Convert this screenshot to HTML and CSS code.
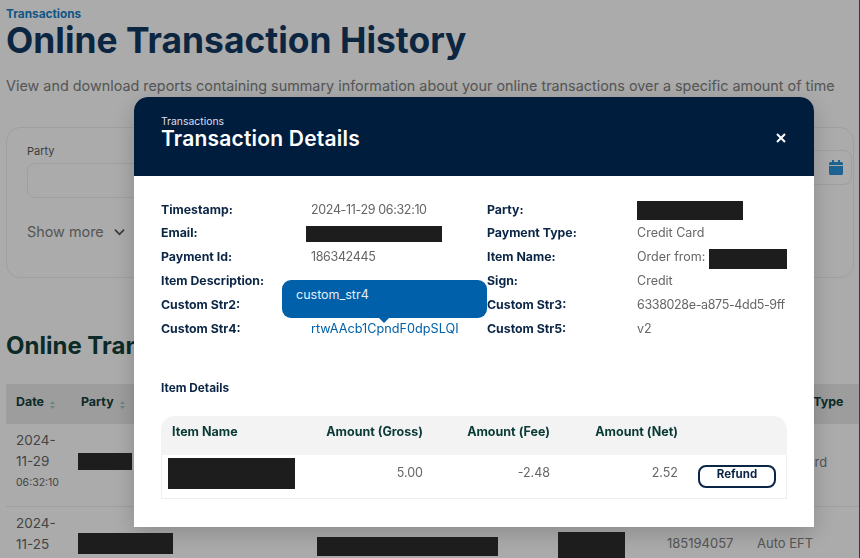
FILE: index.html
```html
<!DOCTYPE html>
<html lang="en">
<head>
	<meta charset="UTF-8">
	<title>Online Transaction History</title>
	<link rel="stylesheet" href="styles.css">
</head>
<body>
	<main class="page">
		<div class="crumb">Transactions</div>
		<h1>Online Transaction History</h1>
		<p class="intro">View and download reports containing summary information about your online transactions over a specific amount of time</p>

		<section class="filters">
			<div class="filter-row">
				<div class="field">
					<label>Party</label>
					<div class="input"></div>
				</div>
				<div class="field date-field">
					<div class="input date-input">
						<svg class="calendar" viewBox="0 0 14 15" width="14" height="15">
							<path d="M3 0h2v2h4V0h2v2h1.500A1.500 1.500 0 0 1 14 3.500V5H0V3.500A1.500 1.500 0 0 1 1.500 2H3zM0 6h14v7.500a1.500 1.500 0 0 1-1.500 1.500h-11A1.500 1.500 0 0 1 0 13.500z" fill="#2a94d9"/>
						</svg>
					</div>
				</div>
			</div>
			<div class="show-more">Show more
				<svg viewBox="0 0 12 8" width="11" height="8"><path d="M1 1.500l5 5 5-5" fill="none" stroke="#555" stroke-width="1.800"/></svg>
			</div>
		</section>

		<h2>Online Transactions</h2>

		<section class="history">
			<div class="history-row history-head">
				<div class="cell">Date <svg class="sort" viewBox="0 0 5 8" width="5" height="8"><path d="M2.500 0L5 3H0zM2.500 8L0 5h5z"/></svg></div>
				<div class="cell">Party <svg class="sort" viewBox="0 0 5 8" width="5" height="8"><path d="M2.500 0L5 3H0zM2.500 8L0 5h5z"/></svg></div>
				<div class="cell"></div>
				<div class="cell"></div>
				<div class="cell"></div>
				<div class="cell">Payment Type</div>
			</div>
			<div class="history-row">
				<div class="cell cell-date">2024-<br>11-29<small>06:32:10</small></div>
				<div class="cell cell-hidden"><span class="redact redact-a"></span></div>
				<div class="cell"></div>
				<div class="cell"></div>
				<div class="cell"></div>
				<div class="cell cell-type">Credit Card</div>
			</div>
			<div class="history-row">
				<div class="cell cell-date">2024-<br>11-25</div>
				<div class="cell cell-hidden"><span class="redact redact-b"></span></div>
				<div class="cell cell-hidden"><span class="redact redact-c"></span></div>
				<div class="cell cell-hidden"><span class="redact redact-d"></span></div>
				<div class="cell cell-low">185194057</div>
				<div class="cell cell-low">Auto EFT</div>
			</div>
		</section>
	</main>

	<div class="backdrop"></div>

	<div class="modal">
		<header class="modal-head">
			<div>
				<div class="modal-crumb">Transactions</div>
				<div class="modal-title">Transaction Details</div>
			</div>
			<svg class="close" viewBox="0 0 10 10" width="10" height="10"><path d="M1 1l8 8M9 1l-8 8" stroke="#fff" stroke-width="2"/></svg>
		</header>
		<div class="modal-body">
			<div class="details">
				<div class="label">Timestamp:</div><div class="value digits">2024-11-29 06:32:10</div>
				<div class="label">Party:</div><div class="value value-open"><span class="redact redact-party"></span></div>

				<div class="label">Email:</div><div class="value value-open"><span class="redact redact-email"></span></div>
				<div class="label">Payment Type:</div><div class="value">Credit Card</div>

				<div class="label">Payment Id:</div><div class="value digits">186342445</div>
				<div class="label">Item Name:</div><div class="value value-open">Order from: <span class="redact redact-order"></span></div>

				<div class="label">Item Description:</div><div class="value"></div>
				<div class="label">Sign:</div><div class="value">Credit</div>

				<div class="label">Custom Str2:</div><div class="value"></div>
				<div class="label">Custom Str3:</div><div class="value digits">6338028e-a875-4dd5-9ff</div>

				<div class="label">Custom Str4:</div>
				<div class="value tip-anchor">
					<div class="tooltip">custom_str4</div>
					<a class="link">rtwAAcb1CpndF0dpSLQI</a>
				</div>
				<div class="label">Custom Str5:</div><div class="value">v2</div>
			</div>

			<h3>Item Details</h3>

			<div class="items">
				<div class="items-row items-head">
					<div>Item Name</div>
					<div class="num">Amount (Gross)</div>
					<div class="num">Amount (Fee)</div>
					<div class="num">Amount (Net)</div>
					<div></div>
				</div>
				<div class="items-row items-line">
					<div><span class="redact redact-item"></span></div>
					<div class="num">5.00</div>
					<div class="num">-2.48</div>
					<div class="num">2.52</div>
					<div><button class="refund">Refund</button></div>
				</div>
			</div>
		</div>
	</div>
</body>
</html>
```

FILE: styles.css
```css
* {
	box-sizing: border-box;
}
html, body {
	margin: 0;
	height: 100%;
	overflow: hidden;
}
body {
	background: #fff;
	font-family: Inter, "Liberation Sans", sans-serif;
	color: #808080;
}

/* page behind the modal */
.page {
	padding: 8px 0 0 6px;
}
.crumb {
	color: #1a7fc9;
	font-size: 11.800px;
	font-weight: 700;
	line-height: 13px;
}
h1 {
	margin: 0;
	color: #133a63;
	font-size: 35.400px;
	font-weight: 700;
	line-height: 40px;
}
.intro {
	margin: 14px 0 0;
	font-size: 14.380px;
	line-height: 22px;
	white-space: nowrap;
}
.filters {
	margin: 30px 0 0;
	width: 848px;
	height: 151px;
	padding: 15px 20px;
	border: 1px solid #eee;
	border-radius: 14px;
}
.filter-row {
	display: flex;
	justify-content: space-between;
}
.field label {
	display: block;
	font-size: 11px;
	line-height: 16px;
	color: #5a5a5a;
}
.input {
	width: 300px;
	height: 35px;
	margin-top: 4px;
	border: 1px solid #eee;
	border-radius: 8px;
}
.date-field {
	padding-top: 3px;
	margin-right: -19px;
}
.date-input {
	display: flex;
	align-items: center;
	justify-content: flex-end;
	padding-right: 8px;
}
.show-more {
	display: flex;
	align-items: center;
	gap: 10px;
	margin-top: 24px;
	font-size: 14.400px;
	line-height: 20px;
}
h2 {
	margin: 53px 0 0;
	color: #123f3a;
	font-size: 24px;
	font-weight: 700;
	line-height: 30px;
}
.history {
	margin-top: 23px;
}
.history-row {
	display: grid;
	grid-template-columns: 65px 239px 241px 106px 90px 1fr;
	height: 83px;
	border-bottom: 1px solid #eee;
}
.history-head {
	height: 40px;
	background: #eaeaea;
	border-bottom: none;
	color: #123f3a;
	font-weight: 700;
}
.cell {
	padding: 10px;
	font-size: 13px;
	line-height: 21px;
	white-space: nowrap;
}
.history-head .cell {
	font-size: 12.400px;
	line-height: 16px;
}
.cell-date {
	padding-top: 6px;
	font-size: 13.500px;
	color: #666;
}
.cell small {
	display: block;
	font-size: 10.500px;
}
.cell-hidden {
	padding: 26px 0 0 7px;
}
.cell-type {
	padding-top: 28px;
}
.cell-low {
	padding-top: 26px;
}
.sort {
	margin-left: 3px;
	vertical-align: -3px;
	fill: #a0c8c0;
}

/* redacted blocks sit on top of everything */
.redact {
	display: inline-block;
	position: relative;
	z-index: 5;
	background: #1d1d1d;
	vertical-align: top;
	flex: none;
}
.redact-a { width: 54px; height: 17px; margin-top: 3px; }
.redact-b { width: 95px; height: 21px; }
.redact-c { width: 181px; height: 19px; margin-top: 4px; }
.redact-d { width: 67px; height: 27px; margin-top: -1px; }

.backdrop {
	position: fixed;
	inset: 0;
	z-index: 1;
	background: rgba(0, 0, 0, .33);
	border-right: 1px solid #3a3a3a;
}

/* modal */
.modal {
	position: fixed;
	left: 134px;
	top: 97px;
	z-index: 2;
	width: 680px;
	height: 430px;
	background: #fff;
	border-radius: 14px 14px 0 0;
	box-shadow: 0 6px 24px rgba(0, 0, 0, .2);
}
.modal-head {
	display: flex;
	align-items: flex-start;
	justify-content: space-between;
	height: 79px;
	padding: 18px 28px 0 27px;
	background: #001d3d;
	border-radius: 14px 14px 0 0;
	color: #fff;
}
.modal-crumb {
	font-size: 10.400px;
	line-height: 13px;
	color: #dde;
}
.modal-title {
	font-size: 21px;
	font-weight: 600;
	letter-spacing: .2px;
	line-height: 22px;
}
.close {
	margin-top: 18px;
}
.modal-body {
	padding: 21.200px 27px;
}
.details {
	display: grid;
	grid-template-columns: 150px 176px 150px 149px;
	grid-auto-rows: 23.800px;
	align-items: center;
	font-size: 12.500px;
}
.label {
	color: #0b2545;
	font-size: 12.300px;
	font-weight: 700;
}
.value {
	color: #666;
	overflow: hidden;
	white-space: nowrap;
}
.digits {
	letter-spacing: -.35px;
}
.value-open {
	display: flex;
	align-items: center;
	gap: 4px;
	overflow: visible;
}
.tip-anchor {
	position: relative;
	overflow: visible;
}
.link {
	color: #0060a9;
	font-size: 12.700px;
}
.tooltip {
	position: absolute;
	left: -29px;
	bottom: 18px;
	z-index: 3;
	width: 205px;
	height: 38px;
	padding: 7px 14px;
	background: #0060a9;
	border-radius: 9px;
	color: #e4eef7;
	line-height: 16px;
}
.tooltip::after {
	content: "";
	position: absolute;
	left: 97px;
	bottom: -5px;
	border-left: 5px solid transparent;
	border-right: 5px solid transparent;
	border-top: 5px solid #0060a9;
}
.redact-party { width: 106px; height: 19px; margin-top: 2px; }
.redact-email { width: 136px; height: 16px; margin: 2px 0 0 -5px; }
.redact-order { width: 78px; height: 20px; margin-top: 4px; }
.redact-item { width: 127px; height: 31px; margin: 3px 0 0 -4px; }
h3 {
	margin: 39.800px 0 0;
	color: #0b2545;
	font-size: 11.800px;
	font-weight: 700;
	line-height: 16px;
}
.items {
	margin-top: 20px;
}
.items-row {
	display: grid;
	grid-template-columns: 140px 111px 127px 128px 108px;
	font-size: 12.500px;
}
.items-head {
	height: 39px;
	padding: 8px 0 0 11px;
	background: #f3f3f3;
	border-radius: 14px 14px 0 0;
	color: #0a3a36;
	font-weight: 700;
}
.items-line {
	height: 44px;
	padding-left: 10px;
	border: 1px solid #eee;
	border-top: none;
	color: #666;
}
.num {
	text-align: right;
}
.items-line .num {
	padding-top: 10px;
}
.refund {
	display: block;
	width: 78px;
	height: 23px;
	margin: 10px 0 0 20px;
	padding: 0 0 6px;
	background: #fff;
	border: 2px solid #0b2545;
	border-radius: 8px;
	color: #0b2545;
	font-family: inherit;
	font-size: 11.500px;
	font-weight: 700;
}
```
